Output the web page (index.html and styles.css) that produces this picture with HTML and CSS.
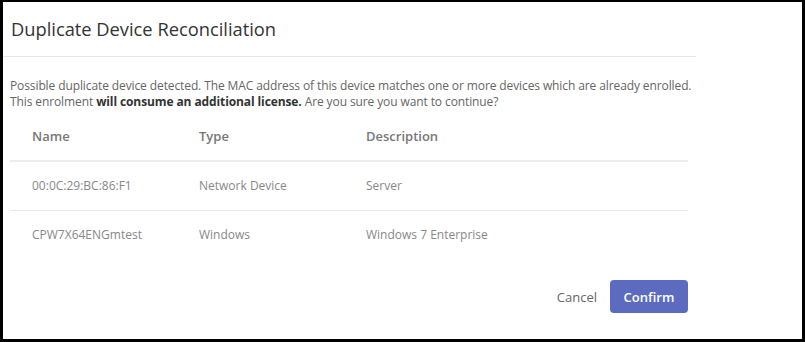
FILE: index.html
```html
<!DOCTYPE html>
<html lang="en">
<head>
  <meta charset="UTF-8">
  <meta name="viewport" content="width=device-width, initial-scale=1.0">
  <title>Duplicate Device Reconciliation</title>
  <link rel="stylesheet" href="styles.css">
</head>
<body>
  <div class="frame">
    <div class="modal">
      <div class="modal-header">
        <h2>Duplicate Device Reconciliation</h2>
      </div>

      <div class="modal-body">
        <p>Possible duplicate device detected. The MAC address of this device matches one or more devices which are already enrolled.<br>
          This enrolment <strong>will consume an additional license.</strong> Are you sure you want to continue?</p>

        <table class="devices">
          <thead>
            <tr>
              <th class="col-name">Name</th>
              <th class="col-type">Type</th>
              <th>Description</th>
            </tr>
          </thead>
          <tbody>
            <tr>
              <td>00:0C:29:BC:86:F1</td>
              <td>Network Device</td>
              <td>Server</td>
            </tr>
            <tr>
              <td>CPW7X64ENGmtest</td>
              <td>Windows</td>
              <td>Windows 7 Enterprise</td>
            </tr>
          </tbody>
        </table>
      </div>

      <div class="modal-footer">
        <button type="button" class="btn-cancel">Cancel</button>
        <button type="button" class="btn-confirm">Confirm</button>
      </div>
    </div>
  </div>
</body>
</html>
```

FILE: styles.css
```css
html, body {
  margin: 0;
  padding: 0;
}
body {
  background: #000;
  font-family: "Open Sans", "Noto Sans", sans-serif;
  color: #666;
}
.frame {
  margin: 2px 3px 0 3px;
  height: 337px;
  background: #fff;
  overflow: hidden;
}
.modal {
  width: 693px;
}
.modal-header {
  padding: 15px 8px 15px 8px;
  border-bottom: 1px solid #e6e6e6;
}
.modal-header h2 {
  margin: 0;
  font-size: 18.3px;
  font-weight: 400;
  line-height: 24px;
  color: #333;
}
.modal-body {
  padding: 0 8px 0 7px;
}
.modal-body p {
  margin: 21px 0 2px 0;
  font-size: 12px;
  line-height: 16px;
  letter-spacing: -0.105px;
  white-space: nowrap;
  color: #666;
}
.modal-body strong {
  font-weight: 700;
  color: #333;
}
.devices {
  width: 100%;
  border-collapse: collapse;
}
.devices th, .devices td {
  text-align: left;
  padding: 15px 22px;
  line-height: 18px;
}
.devices th {
  font-size: 13px;
  font-weight: 600;
  color: #777;
  border-bottom: 2px solid #eeeeee;
}
.devices td {
  font-size: 12px;
  color: #888;
}
.devices tbody tr:first-child td {
  border-bottom: 1px solid #e6e6e6;
}
.col-name, .col-type {
  width: 123px;
}
.modal-footer {
  display: flex;
  justify-content: flex-end;
  align-items: center;
  gap: 14px;
  padding: 21px 8px 0 0;
}
button {
  font-family: "Open Sans", "Noto Sans", sans-serif;
  font-size: 13px;
  cursor: pointer;
  border: none;
}
.btn-cancel {
  background: none;
  color: #666;
  padding: 0;
  margin-right: -1px;
}
.btn-confirm {
  background: #5c6bc0;
  color: #fff;
  font-weight: 600;
  height: 33px;
  width: 78px;
  border-radius: 4px;
}
```
